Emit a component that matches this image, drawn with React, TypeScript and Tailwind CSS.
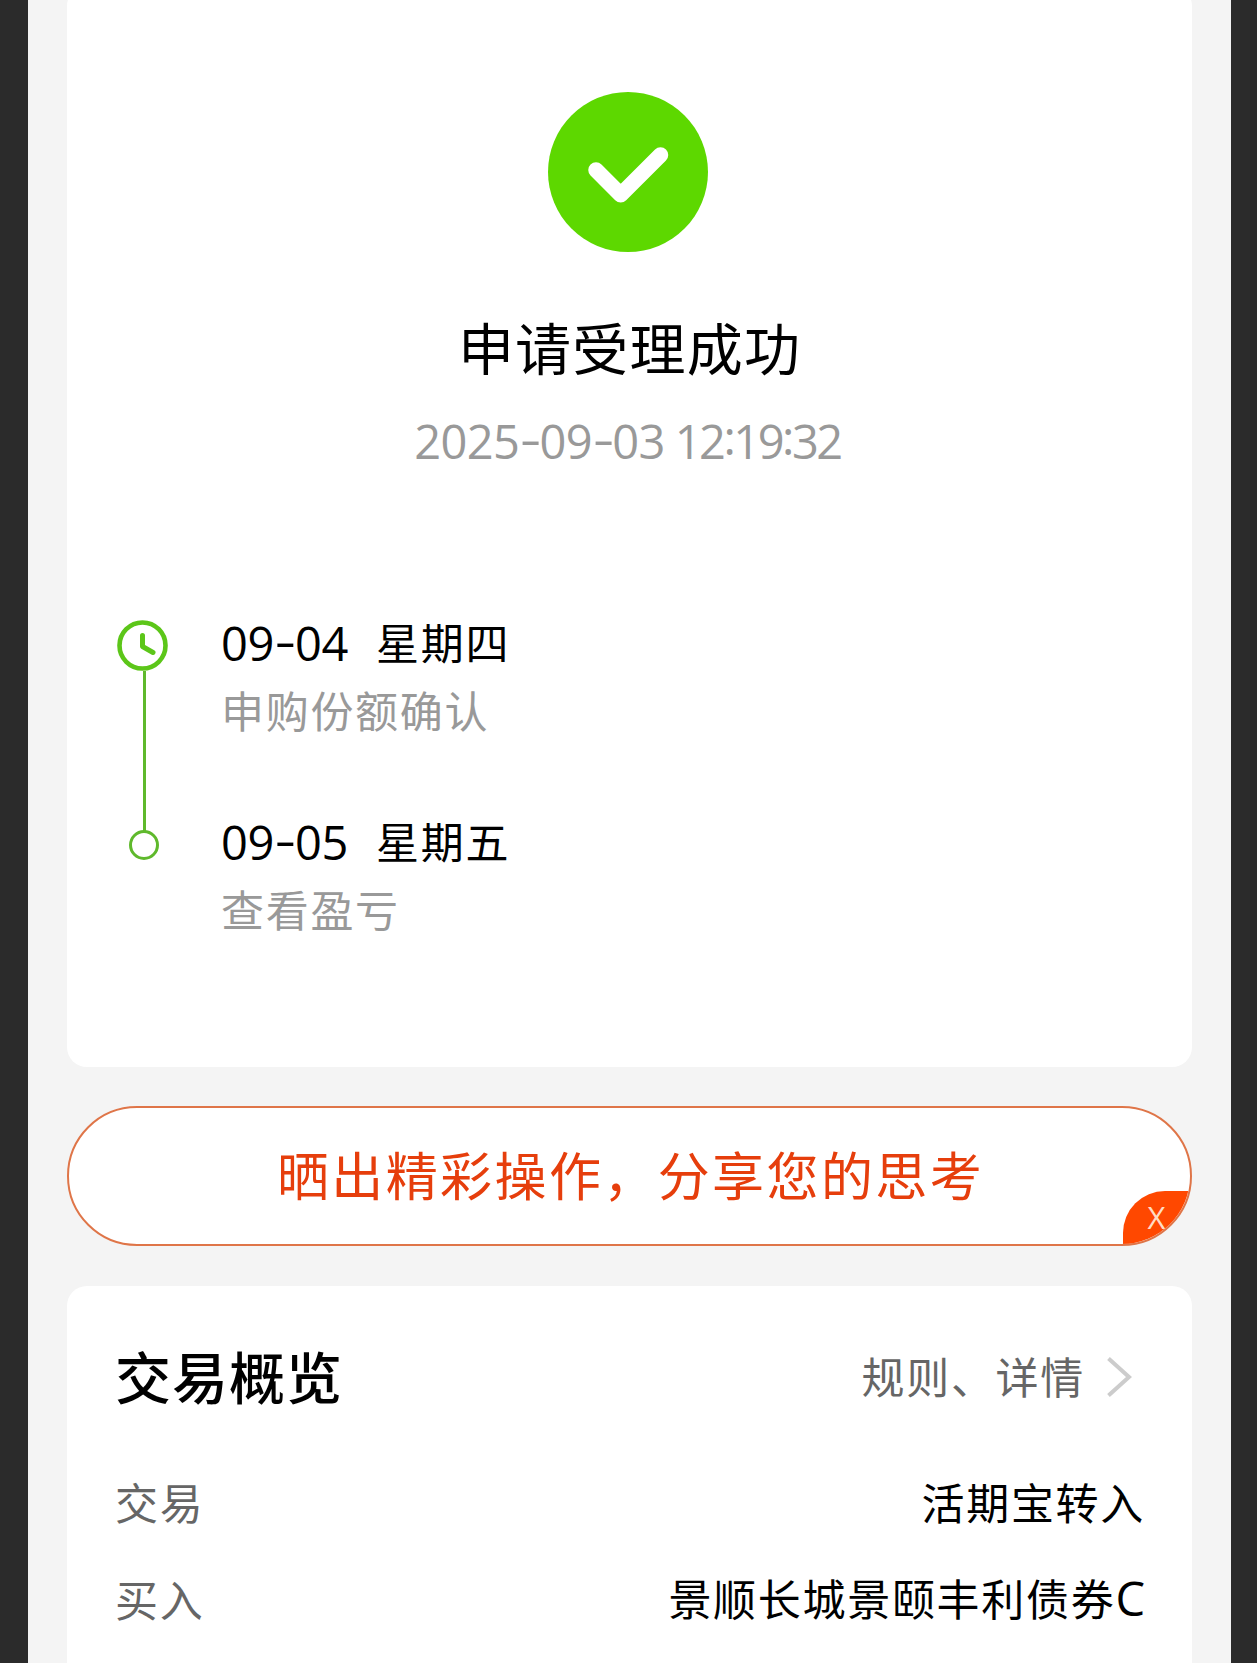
type Step = {
    date: string;
    weekday: string;
    label: string;
    current?: boolean;
};

const steps: Step[] = [
    { date: '09-04', weekday: '星期四', label: '申购份额确认', current: true },
    { date: '09-05', weekday: '星期五', label: '查看盈亏' }
];

const rows = [
    { name: '交易', value: '活期宝转入' },
    { name: '买入', value: '景顺长城景颐丰利债券', suffix: 'C' }
];

// Digits joined by wide, slightly raised hyphens
function DateText({ value }: { value: string }) {
    return (
        <>
            {value.split('-').map((part, i) => (
                <span key={i}>
                    {i > 0 && <span className="mr-[1px] ml-[4px] inline-block origin-center -translate-y-[3px] scale-x-140 pr-[1px]">-</span>}
                    {part}
                </span>
            ))}
        </>
    );
}

// Colons sit at mid height of the digits
function TimeText({ value }: { value: string }) {
    return (
        <>
            {value.split(':').map((part, i) => (
                <span key={i}>
                    {i > 0 && <span className="inline-block -translate-y-[4px]">:</span>}
                    {part}
                </span>
            ))}
        </>
    );
}

function SuccessIcon() {
    return (
        <svg className="mr-[3px] h-40 w-40" viewBox="0 0 160 160" fill="none">
            <circle cx="80" cy="80" r="80" fill="#5dd800" />
            <path d="M48 78L72.7 102.7L112.5 63" stroke="#fff" strokeWidth="15.5" strokeLinecap="round" strokeLinejoin="round" />
        </svg>
    );
}

function ClockIcon() {
    return (
        <svg className="h-[51px] w-[51px] shrink-0" viewBox="0 0 51 51" fill="none" stroke="#5cc619">
            <circle cx="25.5" cy="25.5" r="23" strokeWidth="4.6" />
            <path d="M25.5 15.5V26.5L36 32.5" strokeWidth="5" strokeLinecap="round" strokeLinejoin="round" />
        </svg>
    );
}

function StatusCard() {
    return (
        <section className="-mt-3.5 flex h-[1081px] shrink-0 flex-col rounded-[20px] bg-white pt-[106px]">
            <div className="flex flex-col items-center">
                <SuccessIcon />
                <h1 className="mt-[54px] h-20 text-[56px] leading-[80px] tracking-[1.2px] text-black">申请受理成功</h1>
                <p className="mt-[25px] mr-1 flex h-[60px] gap-[14px] font-['Open_Sans','Noto_Sans_CJK_SC',sans-serif] text-[47px] leading-[60px] whitespace-nowrap text-[#999]">
                    <span className="tracking-[-0.7px]">
                        <DateText value="2025-09-03" />
                    </span>
                    <span className="-ml-1 tracking-[-2.5px]">
                        <TimeText value="12:19:32" />
                    </span>
                </p>
            </div>

            {/* Timeline */}
            <ol className="mt-[143px] pl-[50px]">
                {steps.map((step) => (
                    <li key={step.date} className="flex h-[199px] gap-[53px]">
                        <div className="flex w-[51px] shrink-0 flex-col items-center pt-1.5">
                            {step.current ? (
                                <>
                                    <ClockIcon />
                                    <span className="-mb-[18px] ml-[3px] w-[3px] flex-1 bg-[#5fb92c]" />
                                </>
                            ) : (
                                <span className="mt-[11px] ml-[3px] h-[30px] w-[30px] rounded-full border-[3.5px] border-[#5fb92c]" />
                            )}
                        </div>
                        <div className="-mt-[3px]">
                            <div className="flex h-16 items-center text-[43px] text-black">
                                <span className="w-[155px] font-['Open_Sans',sans-serif] text-[47px] tracking-[-0.3px] whitespace-nowrap">
                                    <DateText value={step.date} />
                                </span>
                                <span className="-mt-[3px] tracking-[1.7px]">{step.weekday}</span>
                            </div>
                            <p className="mt-[2px] h-16 text-[43px] leading-[64px] tracking-[1.7px] text-[#999]">{step.label}</p>
                        </div>
                    </li>
                ))}
            </ol>
        </section>
    );
}

function ShareBanner() {
    return (
        <div className="relative mt-[39px] flex h-[140px] shrink-0 items-center justify-center overflow-hidden rounded-full border-2 border-[#df7548] bg-white">
            <span className="-mt-[5px] pl-0.5 text-[52px] tracking-[2.4px] whitespace-nowrap text-[#e63e0c]">晒出精彩操作，分享您的思考</span>
            <button
                className="absolute right-0 bottom-0 h-[53px] w-[67px] rounded-tl-[42px] bg-[#ff4800] text-center font-['Open_Sans',sans-serif] text-[31px] leading-[51px] text-[#ffdcc4]"
                aria-label="关闭"
            >
                X
            </button>
        </div>
    );
}

function OverviewCard() {
    return (
        <section className="mt-10 h-[420px] shrink-0 rounded-t-[20px] bg-white pt-[49px] pr-[47px] pl-[48px]">
            <header className="flex h-20 items-center justify-between">
                <h2 className="text-[56px] font-medium tracking-[1px] text-black">交易概览</h2>
                <button className="flex items-center pr-3 text-[43px] tracking-[1.7px] text-[#666]">
                    规则、详情
                    <svg className="mt-1 ml-[21px] h-11 w-[27px]" viewBox="0 0 27 44" fill="none">
                        <path d="M2.5 3.5L23 22L2.5 40.5" stroke="#ccc" strokeWidth="4" />
                    </svg>
                </button>
            </header>
            <dl className="mt-[38px]">
                {rows.map((row) => (
                    <div key={row.name} className="flex h-[97px] items-center justify-between text-[43px] tracking-[1.7px]">
                        <dt className="text-[#666]">{row.name}</dt>
                        <dd className="text-black">
                            {row.value}
                            {row.suffix && <span className="font-['Open_Sans',sans-serif] text-[47px] tracking-normal">{row.suffix}</span>}
                        </dd>
                    </div>
                ))}
            </dl>
        </section>
    );
}

export default function App() {
    return (
        <div className="h-[1663px] w-[1257px] overflow-hidden bg-[#2b2b2b] pr-[26px] pl-7 font-['Noto_Sans_CJK_SC',sans-serif]">
            <main className="flex h-full flex-col overflow-hidden bg-[#f4f4f4] px-[39px]">
                <StatusCard />
                <ShareBanner />
                <OverviewCard />
            </main>
        </div>
    );
}
